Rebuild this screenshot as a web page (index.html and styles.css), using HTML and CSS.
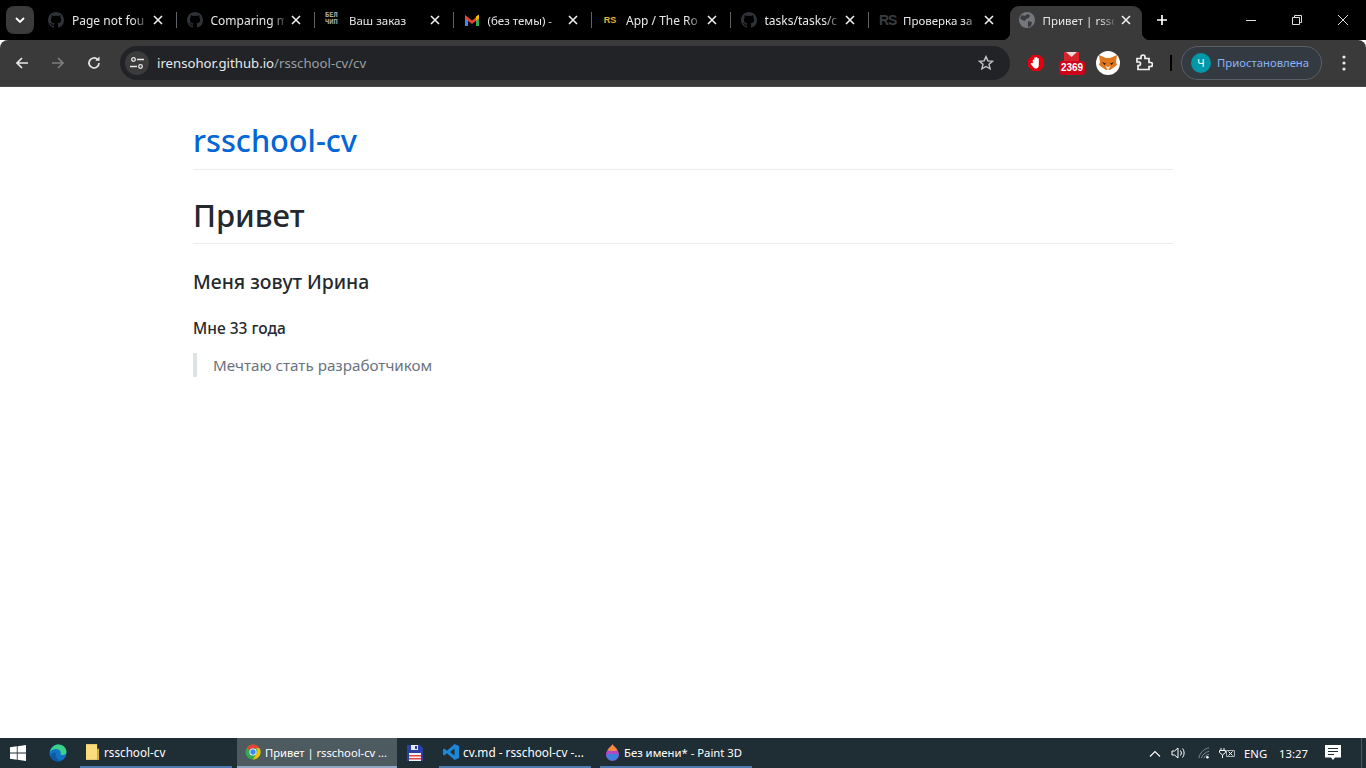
FILE: index.html
```html
<!DOCTYPE html>
<html lang="ru">
<head>
<meta charset="utf-8">
<title>Привет | rsschool-cv</title>
<link rel="stylesheet" href="styles.css">
</head>
<body>
<svg class="defs" width="0" height="0">
	<symbol id="gh" viewBox="0 0 16 16"><path d="M8 0C3.58 0 0 3.58 0 8c0 3.54 2.29 6.53 5.47 7.59.4.07.55-.17.55-.38 0-.19-.01-.82-.01-1.49-2.01.37-2.53-.49-2.69-.94-.09-.23-.48-.94-.82-1.13-.28-.15-.68-.52-.01-.53.63-.01 1.08.58 1.23.82.72 1.21 1.87.87 2.33.66.07-.52.28-.87.51-1.07-1.78-.2-3.64-.89-3.64-3.95 0-.87.31-1.59.82-2.15-.08-.2-.36-1.02.08-2.12 0 0 .67-.21 2.2.82.64-.18 1.32-.27 2-.27.68 0 1.36.09 2 .27 1.53-1.04 2.2-.82 2.2-.82.44 1.1.16 1.92.08 2.12.51.56.82 1.27.82 2.15 0 3.07-1.87 3.75-3.65 3.95.29.25.54.73.54 1.48 0 1.07-.01 1.93-.01 2.2 0 .21.15.46.55.38A8.013 8.013 0 0016 8c0-4.42-3.58-8-8-8z"/></symbol>
	<symbol id="x" viewBox="0 0 10 10"><path d="M1 1l8 8M9 1l-8 8" stroke="currentColor" stroke-width="1.6" fill="none"/></symbol>
</svg>

<div class="tabstrip">
	<div class="tabsearch"><svg width="10" height="6" viewBox="0 0 10 6"><path d="M1 1l4 4 4-4" stroke="#fff" stroke-width="1.8" fill="none"/></svg></div>
	<div class="tab">
		<svg class="fav gh"><use href="#gh"/></svg>
		<span class="tabtitle">Page not fou</span>
		<svg class="tabclose"><use href="#x"/></svg>
	</div>
	<div class="tab">
		<svg class="fav gh"><use href="#gh"/></svg>
		<span class="tabtitle">Comparing m</span>
		<svg class="tabclose"><use href="#x"/></svg>
	</div>
	<div class="tab tab-ru">
		<span class="fav belchip">БЕЛ<br>ЧИП</span>
		<span class="tabtitle">Ваш заказ</span>
		<svg class="tabclose"><use href="#x"/></svg>
	</div>
	<div class="tab tab-ru">
		<svg class="fav" viewBox="0 0 16 16">
			<path d="M1 3v11h3V7z" fill="#4285f4"/>
			<path d="M15 3v11h-3V7z" fill="#34a853"/>
			<path d="M1 3l7 5.500L15 3v3.500L8 12 1 6.500z" fill="#ea4335"/>
			<path d="M12 4.500L15 2.500v4l-3 2z" fill="#fbbc04"/>
		</svg>
		<span class="tabtitle">(без темы) -</span>
		<svg class="tabclose"><use href="#x"/></svg>
	</div>
	<div class="tab">
		<span class="fav rsgold">RS</span>
		<span class="tabtitle">App / The Ro</span>
		<svg class="tabclose"><use href="#x"/></svg>
	</div>
	<div class="tab">
		<svg class="fav gh"><use href="#gh"/></svg>
		<span class="tabtitle">tasks/tasks/c</span>
		<svg class="tabclose"><use href="#x"/></svg>
	</div>
	<div class="tab tab-ru tab-nosep">
		<span class="fav rsdark">RS</span>
		<span class="tabtitle">Проверка за</span>
		<svg class="tabclose"><use href="#x"/></svg>
	</div>
	<div class="tab tab-ru tab-active">
		<svg class="fav" viewBox="0 0 16 16">
			<circle cx="8" cy="8" r="8" fill="#74777b"/>
			<path d="M3 3l3 1 2-2 3 1-1 3-3 1-1 2-3-1-2-2zM9 9l4 1-1 4-3 1z" fill="#3a3b3d"/>
		</svg>
		<span class="tabtitle">Привет | rssc</span>
		<svg class="tabclose"><use href="#x"/></svg>
	</div>
	<svg class="newtab" width="12" height="12" viewBox="0 0 12 12"><path d="M6 1v10M1 6h10" stroke="#fff" stroke-width="1.7"/></svg>
	<div class="wincontrols">
		<svg width="12" height="12" viewBox="0 0 12 12"><path d="M1 6.500h10" stroke="#ddd"/></svg>
		<svg width="12" height="12" viewBox="0 0 12 12"><path d="M1.500 3.500h7v7h-7zM3.500 3.500v-2h7v7h-2" stroke="#ddd" fill="none"/></svg>
		<svg width="12" height="12" viewBox="0 0 12 12"><path d="M1 1l10 10M11 1L1 11" stroke="#ddd" fill="none"/></svg>
	</div>
</div>

<div class="toolbar">
	<svg class="navicon" viewBox="0 0 16 16"><path d="M14 8H3M8 3L3 8l5 5" stroke="#e8e8e8" stroke-width="1.7" fill="none"/></svg>
	<svg class="navicon" viewBox="0 0 16 16"><path d="M2 8h11M8 3l5 5-5 5" stroke="#7d7d7d" stroke-width="1.7" fill="none"/></svg>
	<svg class="navicon" viewBox="0 0 16 16"><path d="M13 8a5 5 0 1 1-1.500-3.600" stroke="#e8e8e8" stroke-width="1.7" fill="none"/><path d="M13.500 1.500v4.200H9.300z" fill="#e8e8e8"/></svg>
	<div class="omnibox">
		<span class="sitebtn">
			<svg width="16" height="12" viewBox="0 0 16 12"><circle cx="4.500" cy="2.500" r="1.800" stroke="#e8e8e8" stroke-width="1.300" fill="none"/><path d="M8 2.500h7M1 9.500h7" stroke="#e8e8e8" stroke-width="1.500"/><circle cx="11.500" cy="9.500" r="1.800" stroke="#e8e8e8" stroke-width="1.300" fill="none"/></svg>
		</span>
		<span class="url"><b>irensohor.github.io</b>/rsschool-cv/cv</span>
		<svg class="star" width="16" height="16" viewBox="0 0 16 16"><path d="M8 1.600l1.900 4.300 4.600.4-3.500 3 1.100 4.600L8 11.500l-4.100 2.400L5 9.300l-3.500-3 4.600-.4z" stroke="#c4c7c5" stroke-width="1.400" fill="none"/></svg>
	</div>
	<div class="extensions">
		<svg class="ext-adblock" width="18" height="18" viewBox="0 0 18 18"><path d="M5.500 1h7L17 5.500v7L12.500 17h-7L1 12.500v-7z" fill="#e3000f"/><path d="M5.800 9.500V6a.8.8 0 0 1 1.500 0V3.800a.8.800 0 0 1 1.500 0V3.500a.8.800 0 0 1 1.500 0V4.500a.8.800 0 0 1 1.500 0V11c0 2-1 3.500-3 3.500-1.500 0-2.300-.8-3-2L3.800 10c-.4-.8 1.200-1.300 2-.5z" fill="#fff"/></svg>
		<div class="ext-mail">
			<svg class="ext-mail-top" width="15" height="10" viewBox="0 0 15 10"><path d="M0 0h15v10H0z" fill="#d8232f"/><path d="M2 0l5.500 5L13 0z" fill="#f4d7d9"/></svg>
			<span class="ext-mail-badge">2369</span>
		</div>
		<span class="ext-fox">
			<svg width="20" height="18" viewBox="0 0 20 18"><path d="M1 1l7 3h4l7-3-1 7 1 3-4 3-3 2h-4l-3-2-4-3 1-3z" fill="#e2761b"/><path d="M4 8l4 1.500L6.500 11zM16 8l-4 1.500 1.500 1.500z" fill="#2b2118"/><path d="M7.500 12l2.500 5 2.500-5-2.500 1z" fill="#f3e0cc"/></svg>
		</span>
		<svg class="ext-puzzle" width="18" height="18" viewBox="0 0 18 18"><path d="M2 5h4V3.500a2 2 0 0 1 4 0V5h4v4h1.500a2 2 0 0 1 0 4H14v3H3v-4h1.500a2 2 0 0 0 0-3.500H2z" transform="translate(0 -.5)" stroke="#f2f2f2" stroke-width="1.700" fill="none"/></svg>
	</div>
	<span class="divider"></span>
	<div class="profile">
		<span class="avatar">Ч</span>
		<span class="profile-label">Приостановлена</span>
	</div>
	<svg class="menu" width="4" height="16" viewBox="0 0 4 16"><circle cx="2" cy="2" r="1.600" fill="#e8e8e8"/><circle cx="2" cy="8" r="1.600" fill="#e8e8e8"/><circle cx="2" cy="14" r="1.600" fill="#e8e8e8"/></svg>
</div>

<main class="page">
	<header class="site-head"><a class="site-title">rsschool-cv</a></header>
	<h1>Привет</h1>
	<h3>Меня зовут Ирина</h3>
	<h4>Мне 33 года</h4>
	<blockquote>Мечтаю стать разработчиком</blockquote>
</main>

<footer class="taskbar">
	<svg class="win" width="16" height="16" viewBox="0 0 16 16"><path d="M0 2.300l6.800-1v6.300H0zM7.600 1.200L16 0v7.600H7.600zM0 8.400h6.800v6.300L0 13.700zM7.600 8.400H16V16l-8.400-1.200z" fill="#fff"/></svg>
	<svg class="edge" width="18" height="18" viewBox="0 0 18 18"><circle cx="9" cy="9" r="8.500" fill="#1273c4"/><path d="M1 8C2 3 6 .5 9.500.5c4.500 0 8 3.500 8 7.500 0 2-1.500 3-3.500 3-1.500 0-2.500-.5-2.500-1 1-2-1-5-4.500-5C4.500 5 2 6 1 8z" fill="#3bd18a"/><path d="M7 9c-1 3 1 7 5 8-3 1.500-8 0-10-4C1 11 3 8 7 9z" fill="#0c59a4"/></svg>
	<div class="task task-explorer">
		<svg width="13" height="16" viewBox="0 0 14 17"><path d="M0 0h12v17H0z" fill="#fbdc7c"/><path d="M12 5h2v12h-2z" fill="#d9b24e"/></svg>
		<span>rsschool-cv</span>
	</div>
	<div class="task task-chrome">
		<svg width="16" height="16" viewBox="0 0 18 18"><circle cx="9" cy="9" r="8.500" fill="#34a853"/><path d="M9 .5a8.500 8.500 0 0 1 7.400 4.300H9a4.200 4.200 0 0 0-4 3L2.200 3.800A8.500 8.500 0 0 1 9 .5z" fill="#ea4335"/><path d="M16.400 4.800A8.500 8.500 0 0 1 9 17.500l3.700-6.300a4.200 4.200 0 0 0-.4-6.400z" fill="#fbbc04"/><circle cx="9" cy="9" r="4" fill="#fff"/><circle cx="9" cy="9" r="3.100" fill="#4285f4"/></svg>
		<span>Привет | rsschool-cv ...</span>
	</div>
	<div class="task-save">
		<svg width="16" height="16" viewBox="0 0 16 16"><path d="M0 0h13l3 3v13H0z" fill="#2b3fa8"/><path d="M4 0h7v5H4z" fill="#e8eaf4"/><path d="M8 1h2v3H8z" fill="#2b3fa8"/><path d="M2 8h12v8H2z" fill="#f4f4f4"/><path d="M2 10h12v1.500H2zM2 13h12v1.500H2z" fill="#e0414f"/></svg>
	</div>
	<div class="task task-code">
		<svg width="16" height="16" viewBox="0 0 16 16"><path d="M11.500 0L16 2v12l-4.500 2L4 9.200 1.200 11.500 0 10.800V5.200l1.200-.7L4 6.800z" fill="#1e88d8"/><path d="M11.500 4.500L7 8l4.500 3.500z" fill="#1f2d35"/></svg>
		<span>cv.md - rsschool-cv -...</span>
	</div>
	<div class="task task-paint">
		<svg width="13" height="17" viewBox="0 0 14 18"><path d="M7 0c1 2 7 6 7 11a7 7 0 0 1-14 0C0 6 6 2 7 0z" fill="#b647c4"/><path d="M7 0c1 2 4 4 5.500 6.500C10 8 4 7 1.500 6.500 3 4 6 2 7 0z" fill="#f58a3c"/><path d="M.2 12c3-2 9-2 13.600-1A7 7 0 0 1 1 14.500z" fill="#3f7fe0"/></svg>
		<span>Без имени* - Paint 3D</span>
	</div>
	<div class="tray">
		<svg class="tray-chevron" width="12" height="7" viewBox="0 0 12 7"><path d="M1 6.500l5-5 5 5" stroke="#fff" stroke-width="1.100" fill="none"/></svg>
		<svg width="16" height="14" viewBox="0 0 16 14"><path d="M1 5h2.500L7 2v10L3.500 9H1z" stroke="#fff" fill="none"/><path d="M9.500 4.500a4 4 0 0 1 0 5M11.500 2.500a7 7 0 0 1 0 9" stroke="#fff" fill="none"/></svg>
		<svg class="tray-wifi" width="12" height="12" viewBox="0 0 14 14"><path d="M1 13C2 7 7 2 13 1M4 13c1-3.500 4-7 9-8M7 13c.5-2 2.500-4 6-4.500" stroke="#8c979d" fill="none"/><circle cx="11" cy="12" r="1.500" fill="#fff"/></svg>
		<svg class="tray-power" width="16" height="12" viewBox="0 0 16 12"><path d="M2 1v2.500M5 1v2.500M.5 3.500h6v2L3.500 8 .5 5.500zM3.500 8v3" stroke="#fff" fill="none"/><path d="M7.500 3.500h8v6h-8z" stroke="#aab2b6" fill="none"/><path d="M9.500 4.500l4 4M13.500 4.500l-4 4" stroke="#fff"/></svg>
		<span class="lang">ENG</span>
		<span class="clock">13:27</span>
		<svg class="notify" width="16" height="16" viewBox="0 0 16 16"><path d="M0 0h16v12.500H10L8 15l-2-2.500H0z" fill="#fff"/><path d="M3 3.500h10M3 6.500h10M3 9.500h6" stroke="#1f2d35"/></svg>
		<span class="showdesk"></span>
	</div>
</footer>
</body>
</html>
```

FILE: styles.css
```css
*{margin:0;padding:0;box-sizing:border-box;}
html,body{height:100%;overflow:hidden;}
body{display:flex;flex-direction:column;background:#fff;font-family:"Noto Sans","Open Sans",sans-serif;}
.defs{position:absolute;}

/* tabs */
.tabstrip{height:40px;background:#000;display:flex;align-items:flex-start;flex:none;padding-left:6px;position:relative;}
.tabsearch{width:28px;height:28px;margin-top:6px;margin-right:4px;background:#3b3b3b;border-radius:8px;display:flex;align-items:center;justify-content:center;}
.tab{width:138.5px;height:40px;flex:none;display:flex;align-items:center;padding:0 14px 1px 10px;position:relative;color:#e8e8e8;font-size:12px;}
.tab-ru{font-size:11.500px;}
.tab::after{content:"";position:absolute;right:0;top:12px;height:16px;width:1px;background:#5f6368;}
.tab-nosep::after{display:none;}
.tab-active{width:132px;margin-left:2px;margin-top:6px;height:34px;background:#3a3a3a;border-radius:9px 9px 0 0;padding:0 11px 6px 9px;color:#e6e6e6;}
.tab-active::before,.tab-active::after{content:"";display:block;position:absolute;bottom:0;top:auto;width:8px;height:8px;}
.tab-active::before{left:-8px;background:radial-gradient(circle at 0 0,#000 8px,#3a3a3a 8.500px);}
.tab-active::after{right:-8px;background:radial-gradient(circle at 100% 0,#000 8px,#3a3a3a 8.500px);}
.fav{width:16px;height:16px;flex:none;margin-right:8px;}
.gh{fill:#2f3236;}
.belchip{font:700 7px/7.500px "DejaVu Sans Mono",monospace;color:#aaa;letter-spacing:0;}
.rsgold{font:800 9px/16px "Liberation Sans",sans-serif;color:#e8b33c;text-align:center;}
.rsdark{font:800 14px/16px "Liberation Sans",sans-serif;color:#3a3d40;margin-right:8px;letter-spacing:-1px;}
.tabtitle{flex:1;min-width:0;margin-top:2px;overflow:hidden;white-space:nowrap;-webkit-mask-image:linear-gradient(90deg,#000 82%,rgba(0,0,0,.25) 100%);mask-image:linear-gradient(90deg,#000 82%,rgba(0,0,0,.25) 100%);}
.tab-active .tabtitle{margin-top:0;}
.tabclose{width:10px;height:10px;flex:none;margin-left:7px;color:#f0f0f0;}
.newtab{margin-top:14px;margin-left:14px;}
.wincontrols{margin-left:auto;display:flex;gap:34px;height:40px;align-items:center;padding-right:17px;padding-bottom:1px;}

/* toolbar */
.toolbar{height:47px;flex:none;background:#3a3a3a;border-bottom:1px solid #4b4b4b;border-radius:8px 8px 0 0;display:flex;align-items:center;padding:0 0 0 14px;}
.navicon{width:16px;height:16px;flex:none;margin-right:20px;}
.omnibox{width:890px;height:34px;margin-left:-2px;background:#212327;border-radius:17px;display:flex;align-items:center;padding-left:5px;padding-right:16px;}
.sitebtn{width:24px;height:24px;border-radius:50%;background:#3b3b3b;display:flex;align-items:center;justify-content:center;flex:none;margin-right:8px;}
.url{flex:1;font-size:13.200px;color:#9aa0a6;white-space:nowrap;}
.url b{font-weight:400;color:#e8eaed;}
.star{flex:none;}
.extensions{display:flex;align-items:center;margin-left:17px;}
.ext-adblock{margin-right:14px;}
.ext-mail{width:26px;height:24px;position:relative;margin-right:11px;}
.ext-mail-top{position:absolute;left:5px;top:1px;}
.ext-mail-badge{position:absolute;left:0;bottom:0;width:26px;height:14px;background:#d0021b;border-radius:3px;color:#fff;font:700 10px/14px "Liberation Sans",sans-serif;text-align:center;}
.ext-fox{width:24px;height:24px;background:#fff;border-radius:50%;display:flex;align-items:center;justify-content:center;margin-right:15px;}
.divider{width:2px;height:16px;background:#000;margin:0 9px 0 17px;}
.profile{width:141px;height:34px;border:1px solid #5a5f66;background:#343a42;border-radius:17px;display:flex;align-items:center;padding-left:9px;}
.avatar{width:20px;height:20px;border-radius:50%;background:#0097a7;color:#fff;font-size:11px;line-height:20px;text-align:center;margin-right:6px;flex:none;}
.profile-label{font-size:11.300px;color:#8ab4f8;white-space:nowrap;margin-bottom:1px;}
.menu{margin-left:20px;}

/* page */
.page{flex:1;width:980px;margin:0 auto;padding-top:33px;color:#24292e;}
.site-head{border-bottom:1px solid #eaecef;padding-bottom:7px;margin-bottom:25px;height:50px;}
.site-title{font-size:30.700px;line-height:40px;color:#0366d6;font-weight:500;display:block;}
h1{font-size:31px;line-height:40px;font-weight:500;border-bottom:1px solid #eaecef;padding-bottom:8px;margin-bottom:25px;}
h3{font-size:19.400px;line-height:25px;font-weight:500;margin-bottom:24px;}
h4{font-size:15.500px;line-height:20px;font-weight:500;margin-bottom:15px;}
blockquote{font-size:15.200px;line-height:24px;color:#6a737d;border-left:4px solid #dfe2e5;padding:0 16px;}

/* windows taskbar */
.taskbar{height:30px;flex:none;background:#1f2d35;display:flex;align-items:center;color:#fff;font-size:11.700px;}
.win{margin-left:10px;margin-right:23px;}
.edge{margin-right:13px;}
.task{height:30px;display:flex;align-items:center;border-bottom:2px solid #4b7bb0;white-space:nowrap;}
.task-explorer{width:152px;padding-left:6px;gap:5px;margin-right:5px;}
.task-chrome{width:160px;padding-left:8px;gap:4px;background:#4d5a60;border-bottom-color:#8fa9c4;font-size:11.200px;}
.task-save{width:42px;padding-left:10px;display:flex;align-items:center;}
.task-code{width:152px;padding-left:4px;gap:4px;margin-right:9px;font-size:11.800px;}
.task-paint{width:152px;padding-left:6px;gap:5px;font-size:11.300px;}
.tray{margin-left:auto;display:flex;align-items:center;height:30px;font-size:11.300px;}
.tray-chevron{margin-right:10px;}
.tray-wifi{margin-left:11px;}
.tray-power{margin-left:9px;}
.lang{margin-left:9px;}
.clock{margin-left:12px;}
.notify{margin-left:17px;margin-right:20px;}
.showdesk{width:1px;height:30px;background:#4a565c;margin-right:4px;}
```
